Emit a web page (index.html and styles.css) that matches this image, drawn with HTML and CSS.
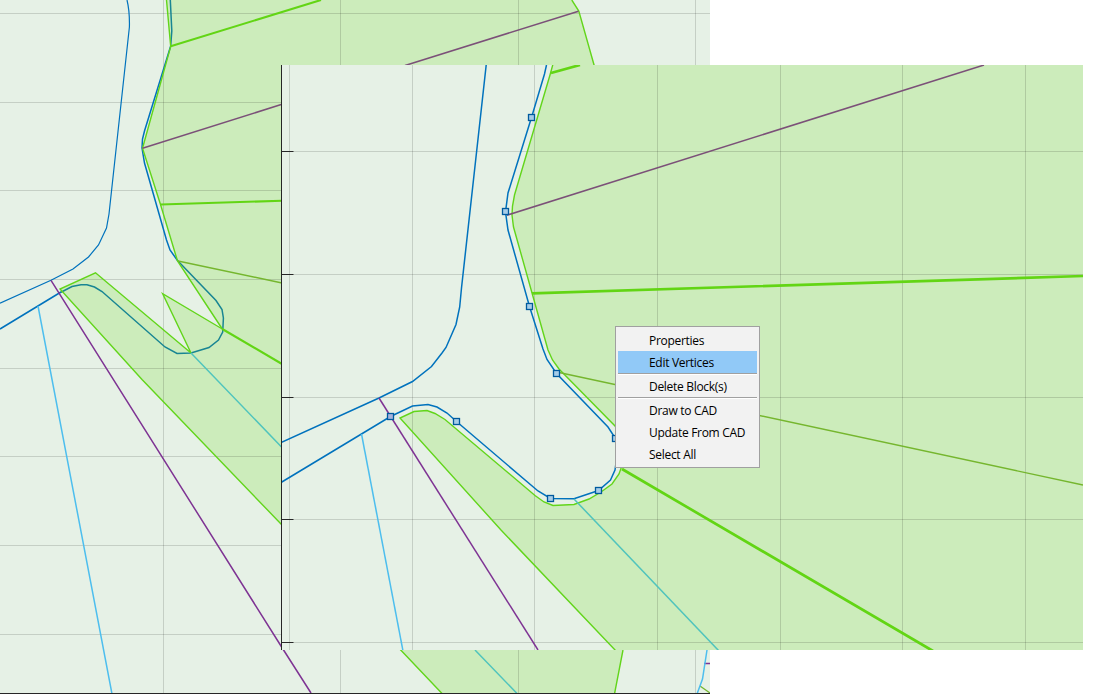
FILE: index.html
```html
<!DOCTYPE html>
<html lang="en">
<head>
<meta charset="utf-8">
<title>Block editor</title>
<link rel="stylesheet" href="styles.css">
</head>
<body>
<main class="desktop">
  <svg class="plan plan-back" viewBox="0 0 710 694" width="710" height="694">
    <rect class="ground" width="710" height="694"/>
    <path class="parcel" d="M166.500 0L170.700 46.500L142.500 148.300L160.500 204.500L177.500 261L222.300 329L162.700 293.700L191 353L95.500 272.800L60 289L142 379.500L281.500 524.500L401 650.500L442.500 694H614.500L623 650L594.200 65.500L578.800 11L571.800 0Z"/>
    <path class="grid" d="M163.500 0V694M340.500 0V694M518.500 0V694M695.500 0V694M0 13.500H710M0 102.500H710M0 190.500H710M0 279.500H710M0 368.500H710M0 456.500H710M0 545.500H710M0 634.500H710"/>
    <path class="road thin" d="M127 0C129 8 129.700 14 129.400 27L109 214L106.500 228L98.500 245L88.500 257L73 269L51 280.300L0 303.200"/>
    <path class="road" d="M0 329L61 292M170.700 46L144.500 131L142.500 139L142 148L144.500 163L166.500 240L170 250L177.500 260.500"/>
    <path class="road covered" d="M170.300 0L171.800 31L170.700 46M177.500 260.500L216 300.500L222 309.500L223.400 318L222.700 332L218.500 340L209 347.500L191 353L177 353.500L165 347L102 291.500L94.500 287L87 284.800H81L72 286.500L60.500 292.500"/>
    <path class="edge" d="M166.500 0L170.700 46.500L142.500 148.300L160.500 204.500L177.500 261L222.300 329"/>
    <path class="edge" d="M222.300 329L162.700 293.700L191 353L95.500 272.800L60 289L142 379.500L281.500 524.500L442.500 694M614.500 694L623 650M594.200 65.500L578.800 11L571.800 0"/>
    <path class="side back-side" d="M170.700 46.300L321 0M160.500 204.500L282 200.700M222.300 329L282 364"/>
    <path class="rear" d="M178 261L282 283M700 686L710 693"/>
    <path class="axis muted" d="M142.500 148.300L282 104.300M405 65.500L578.500 11.200"/>
    <path class="axis" d="M51 280.300L281 646L311 693M704 663.500H710"/>
    <path class="pipe" d="M38 306L112 694M707 650L702.500 679L697 694"/>
    <path class="pipe covered-pipe" d="M191 353L282 447.500M475 650L517.500 694"/>
    <path class="frame" d="M0 693.500H710"/>
  </svg>

  <svg class="plan plan-front" viewBox="281 65 802 585" width="802" height="585">
    <rect class="ground" x="281" y="65" width="802" height="585"/>
    <path class="parcel" d="M553 64L550 75L514.500 195L512.500 206L512 215L513.500 227L548 350L552.500 360L559 369L615 426L624 443V460L619 474L612 484L601 492L589 499L574 504.500L553 505.500L544 502L535 495.500L445 419.500L435 413.500L427 410.500L414 411.500L400 418L501 530L616 651H1084V64Z"/>
    <path class="grid" d="M289.500 65V650M412.500 65V650M534.500 65V650M657.500 65V650M780.500 65V650M902.500 65V650M1025.500 65V650M281 151.500H1083M281 274.500H1083M281 397.500H1083M281 519.500H1083M281 642.500H1083"/>
    <path class="edge" d="M553 64L550 75L514.500 195L512.500 206L512 215L513.500 227L548 350L552.500 360L559 369L615 426L624 443V460L619 474L612 484L601 492L589 499L574 504.500L553 505.500L544 502L535 495.500L445 419.500L435 413.500L427 410.500L414 411.500L400 418L501 530L616 651"/>
    <path class="road" d="M486.200 65L461.500 288L459.700 307L456 324.500L446 347.500L442 353L431.500 366.500L412.500 381.500L379 398L281 442.500"/>
    <path class="road" d="M281 482.500L390.500 416.500L412.500 406L428 404.500L437 407L447 413L456.500 421.500L538 491L550.500 498.500L574 498.800L598.500 490.500L610.500 480L615 470L617 456L615.500 438.500L608 427L556.500 373.500L547 359.500L543 349L529.500 306.500L508 230L505.500 212L508 193L531.500 117.500L544.500 74L546.500 65"/>
    <path class="side" d="M551 73L580 65M532 293.300L1083 276M622 469L933 651"/>
    <path class="rear" d="M559 372.500L1083 485"/>
    <path class="axis muted" d="M507 215.200L984 65"/>
    <path class="axis" d="M379 398L538 650"/>
    <path class="pipe" d="M361.500 434L403 651"/>
    <path class="pipe covered-pipe" d="M574 499L719 651"/>
    <path class="frame" d="M281.500 65V650"/>
    <path class="frame" d="M282 151.500H293.500M282 274.500H293.500M282 397.500H293.500M282 519.500H293.500M282 642.500H293.500"/>
    <g class="vertices">
      <rect x="528.500" y="114.500" width="6" height="6"/>
      <rect x="502.500" y="208.500" width="6" height="6"/>
      <rect x="526.500" y="303.500" width="6" height="6"/>
      <rect x="553.500" y="370.500" width="6" height="6"/>
      <rect x="612.500" y="435.500" width="6" height="6"/>
      <rect x="595.500" y="487.500" width="6" height="6"/>
      <rect x="547.500" y="495.500" width="6" height="6"/>
      <rect x="453.500" y="418.500" width="6" height="6"/>
      <rect class="anchor" x="387.500" y="413.500" width="6" height="6"/>
    </g>
  </svg>

  <ul class="menu" role="menu">
    <li class="item first" role="menuitem">Properties</li>
    <li class="item selected" role="menuitem">Edit Vertices</li>
    <li class="divider" role="separator"></li>
    <li class="item" role="menuitem">Delete Block(s)</li>
    <li class="divider" role="separator"></li>
    <li class="item" role="menuitem">Draw to CAD</li>
    <li class="item" role="menuitem">Update From CAD</li>
    <li class="item" role="menuitem">Select All</li>
  </ul>
</main>
</body>
</html>
```
FILE: styles.css
```css
body {
  margin: 0;
  background: #fff;
}

.desktop {
  position: relative;
  width: 1093px;
  height: 694px;
  overflow: hidden;
}

.plan {
  display: block;
  overflow: hidden;
  fill: none;
}

.plan-front {
  position: absolute;
  left: 281px;
  top: 65px;
}

.ground { fill: #e6f1e6; }
.parcel { fill: #ccecbb; }
.grid { stroke: rgba(0, 0, 0, 0.14); }
.road { stroke: #0072bd; stroke-width: 1.5; }
.thin { stroke-width: 1.2; }
.covered { stroke: #188593; }
.edge { stroke: #62d51a; stroke-width: 1.4; }
.side { stroke: #62d514; stroke-width: 2.7; }
.back-side { stroke-width: 2.1; }
.rear { stroke: #75b62e; stroke-width: 1.4; }
.axis { stroke: #7e3393; stroke-width: 1.5; }
.muted { stroke: #7b5078; }
.pipe { stroke: #4dbeee; stroke-width: 1.5; }
.covered-pipe { stroke: #50c4bd; }
.frame { stroke: #262626; }

.vertices {
  fill: #a6cde8;
  stroke: #005a9e;
  stroke-width: 1.3;
}

.anchor { fill: #a9b4dc; }

.menu {
  position: absolute;
  left: 615px;
  top: 326px;
  box-sizing: border-box;
  width: 145px;
  height: 142px;
  margin: 0;
  padding: 3px 2px 2px;
  border: 1px solid #a0a0a0;
  background: #f2f2f2;
  list-style: none;
  color: #000;
  font: 12px/24px "Open Sans", "Noto Sans", sans-serif;
  letter-spacing: -0.3px;
}

.item {
  height: 22px;
  padding-left: 31px;
  white-space: nowrap;
}

.first {
  line-height: 22px;
}

.selected {
  margin-top: -1px;
  background: #91c9f7;
}

.divider {
  height: 1px;
  border-top: 1px solid #a0a0a0;
  background: #fff;
}
```
